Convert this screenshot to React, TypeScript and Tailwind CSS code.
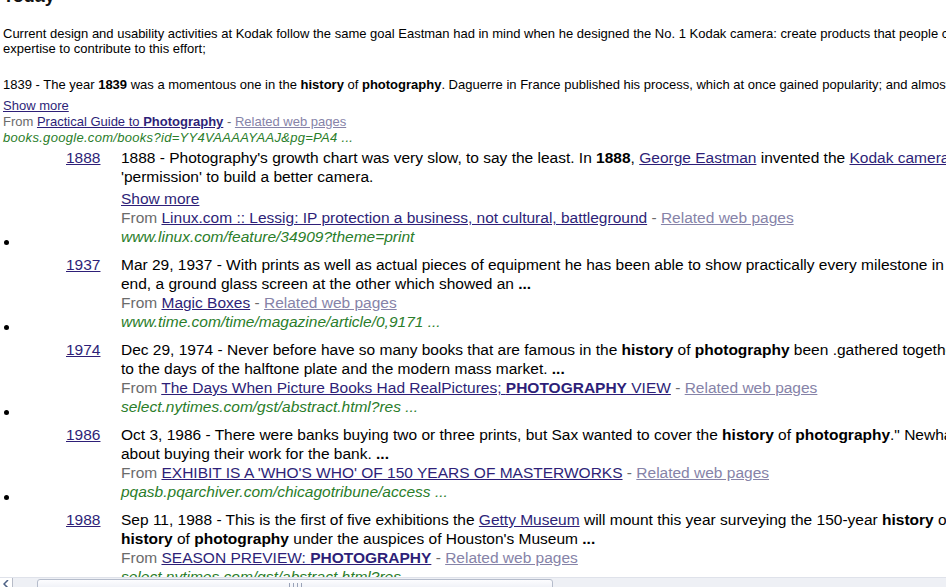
import React from "react";

const LINK = "text-[#2e1f78] underline";
const REL = "text-[#8683a8] underline";
const FROM = "text-[#6b6b6b]";
const URL = "text-[#2a7d2a] italic";

type Item = {
  year: string;
  lines: React.ReactNode[];
  showMore?: boolean;
  from: React.ReactNode;
  url: string;
};

const items: Item[] = [
  {
    year: "1888",
    lines: [
      <>
        1888 - Photography's growth chart was very slow, to say the least. In <b>1888</b>,{" "}
        <a className={LINK}>George Eastman</a> invented the <a className={LINK}>Kodak camera</a> and gave the average person
      </>,
      <>'permission' to build a better camera.</>,
    ],
    showMore: true,
    from: <a className={LINK}>Linux.com :: Lessig: IP protection a business, not cultural, battleground</a>,
    url: "www.linux.com/feature/34909?theme=print",
  },
  {
    year: "1937",
    lines: [
      <>Mar 29, 1937 - With prints as well as actual pieces of equipment he has been able to show practically every milestone in the</>,
      <>
        end, a ground glass screen at the other which showed an <b>...</b>
      </>,
    ],
    from: <a className={LINK}>Magic Boxes</a>,
    url: "www.time.com/time/magazine/article/0,9171 ...",
  },
  {
    year: "1974",
    lines: [
      <>
        Dec 29, 1974 - Never before have so many books that are famous in the <b>history</b> of <b>photography</b> been .gathered together
      </>,
      <>
        to the days of the halftone plate and the modern mass market. <b>...</b>
      </>,
    ],
    from: (
      <a className={LINK}>
        The Days When Picture Books Had RealPictures; <b>PHOTOGRAPHY</b> VIEW
      </a>
    ),
    url: "select.nytimes.com/gst/abstract.html?res ...",
  },
  {
    year: "1986",
    lines: [
      <>
        Oct 3, 1986 - There were banks buying two or three prints, but Sax wanted to cover the <b>history</b> of <b>photography</b>." Newhall
      </>,
      <>
        about buying their work for the bank. <b>...</b>
      </>,
    ],
    from: <a className={LINK}>EXHIBIT IS A 'WHO'S WHO' OF 150 YEARS OF MASTERWORKS</a>,
    url: "pqasb.pqarchiver.com/chicagotribune/access ...",
  },
  {
    year: "1988",
    lines: [
      <>
        Sep 11, 1988 - This is the first of five exhibitions the <a className={LINK}>Getty Museum</a> will mount this year surveying the
        150-year <b>history</b> of
      </>,
      <>
        <b>history</b> of <b>photography</b> under the auspices of Houston's Museum <b>...</b>
      </>,
    ],
    from: (
      <a className={LINK}>
        SEASON PREVIEW: <b>PHOTOGRAPHY</b>
      </a>
    ),
    url: "select.nytimes.com/gst/abstract.html?res ...",
  },
];

export default function App() {
  return (
    <div
      className="relative w-[946px] h-[587px] overflow-hidden bg-white text-black"
      style={{ fontFamily: '"Liberation Sans", Arial, sans-serif' }}
    >
      <div className="pl-[3px]">
        <div className="text-[18px] font-bold leading-[22px] -mt-[15px] text-[#111]">Today</div>
        <div className="mt-[19px] text-[13px] leading-[15px] whitespace-nowrap">
          <div>
            Current design and usability activities at Kodak follow the same goal Eastman had in mind when he designed the No. 1 Kodak
            camera: create products that people can use
          </div>
          <div>expertise to contribute to this effort;</div>
        </div>
        <div className="mt-[21px] text-[13px] leading-[15px] whitespace-nowrap">
          1839 - The year <b>1839</b> was a momentous one in the <b>history</b> of <b>photography</b>. Daguerre in France published his
          process, which at once gained popularity; and almost
        </div>
        <div className="mt-[6px] text-[13px] leading-[16px] whitespace-nowrap">
          <div>
            <a className={LINK}>Show more</a>
          </div>
          <div>
            <span className={FROM}>From </span>
            <a className={LINK}>
              Practical Guide to <b>Photography</b>
            </a>
            <span className={FROM}> - </span>
            <a className={REL}>Related web pages</a>
          </div>
          <div className={URL + " tracking-[0.3px]"}>books.google.com/books?id=YY4VAAAAYAAJ&amp;pg=PA4 ...</div>
        </div>
      </div>

      <ul className="mt-[2px] flex flex-col gap-[9px] text-[15.5px] leading-[19px]">
        {items.map((it) => (
          <li key={it.year} className="flex items-end">
            <div className="w-[66px] shrink-0 flex items-end pb-[1px]">
              <div className="ml-[4px] w-[5px] h-[5px] rounded-full bg-black" />
            </div>
            <div className="flex items-start self-stretch">
              <div className="w-[55px] shrink-0">
                <a className={LINK}>{it.year}</a>
              </div>
              <div className="whitespace-nowrap">
                {it.lines.map((l, i) => (
                  <div key={i}>{l}</div>
                ))}
                {it.showMore && (
                  <div className="mt-[3px]">
                    <a className={LINK}>Show more</a>
                  </div>
                )}
                <div>
                  <span className={FROM}>From </span>
                  {it.from}
                  <span className={FROM}> - </span>
                  <a className={REL}>Related web pages</a>
                </div>
                <div className={URL}>{it.url}</div>
              </div>
            </div>
          </li>
        ))}
      </ul>

      {/* horizontal scrollbar */}
      <div className="absolute left-0 right-0 top-[577px] h-[17px] bg-[#eef0f5] border-t border-[#dfe2ea]">
        <div className="absolute left-0 top-0 w-[13px] h-[17px] bg-white border-r border-[#b7bcc8] flex items-start justify-center pt-[2px]">
          <svg width="7" height="8" viewBox="0 0 7 8">
            <path d="M5 0 L1 4 L5 8" stroke="#4d6185" strokeWidth="1.5" fill="none" />
          </svg>
        </div>
        <div className="absolute left-[37px] top-[1px] w-[516px] h-[15px] rounded-[3px] border border-[#b5bccb] bg-gradient-to-b from-[#fdfdff] to-[#e6e9f1] flex items-start justify-center pt-[3px] gap-[1px]">
          <div className="w-[1px] h-[5px] bg-[#9aa3b8]" />
          <div className="w-[1px] h-[5px] bg-transparent" />
          <div className="w-[1px] h-[5px] bg-[#9aa3b8]" />
          <div className="w-[1px] h-[5px] bg-transparent" />
          <div className="w-[1px] h-[5px] bg-[#9aa3b8]" />
          <div className="w-[1px] h-[5px] bg-transparent" />
          <div className="w-[1px] h-[5px] bg-[#9aa3b8]" />
        </div>
      </div>
    </div>
  );
}
